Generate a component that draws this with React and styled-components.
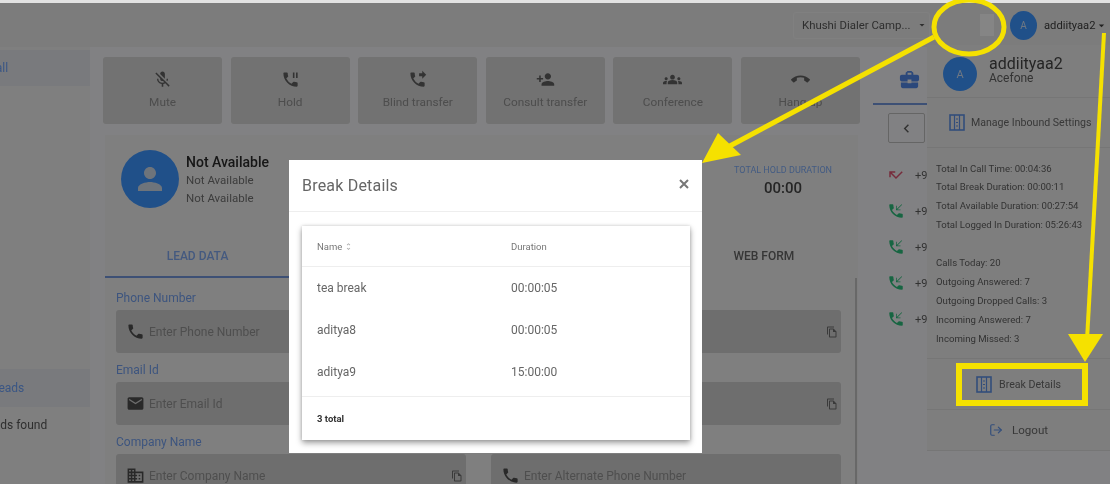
import React from "react";
import styled, { createGlobalStyle } from "styled-components";
import {
  MdMicOff, MdPhonePaused, MdPhoneForwarded, MdPersonAdd, MdGroups, MdCallEnd, MdPerson,
  MdPhone, MdEmail, MdBusiness, MdOutlineFileCopy, MdChevronLeft, MdPhoneCallback,
  MdCallMissed, MdBusinessCenter, MdArrowDropDown, MdUnfoldMore,
} from "react-icons/md";
import { LuLogOut } from "react-icons/lu";

const Global = createGlobalStyle`
  html, body { margin: 0; padding: 0; background: #fff; height: 484px; overflow: hidden; }
  body { font-family: Roboto, "Liberation Sans", sans-serif; }
  * { box-sizing: border-box; }
`;

const Shot = styled.div`
  position: relative;
  width: 1110px;
  height: 484px;
  overflow: hidden;
  filter: blur(0.7px);
`;

const Page = styled.div`
  width: 1110px;
  height: 484px;
  background: #ececee;
  display: flex;
  flex-direction: column;
  color: #3a3a3a;
`;

const TopBar = styled.header`
  height: 47px;
  flex: none;
  background: #e2e2e2;
  display: flex;
  align-items: center;
  padding: 3px 0 0 793px;
`;

const CampaignSelect = styled.div`
  width: 137px;
  height: 27px;
  border: 1px solid #e9e9e9;
  border-radius: 3px;
  display: flex;
  align-items: center;
  padding-left: 8px;
  font-size: 11.4px;
  color: #555;
  white-space: nowrap;
  svg { font-size: 12px; margin-left: 6px; }
`;

const Toggle = styled.div`
  width: 50px;
  height: 22px;
  margin-left: 20px;
  display: flex;
  justify-content: flex-end;
`;

const ToggleThumb = styled.div`
  width: 14px;
  height: 22px;
  background: #f2f2f2;
  margin-right: 6px;
`;

const Avatar = styled.div`
  width: ${(p) => p.$size}px;
  height: ${(p) => p.$h || p.$size}px;
  flex: none;
  border-radius: 50%;
  background: #3b92fa;
  color: #c9d9ee;
  font-size: ${(p) => p.$font || 11}px;
  display: flex;
  align-items: center;
  justify-content: center;
`;

const UserChip = styled.div`
  display: flex;
  align-items: center;
  margin-left: 10px;
  font-size: 11.2px;
  color: #3c3c3c;
  white-space: nowrap;
  span { margin-left: 7px; }
  svg { font-size: 13px; margin-left: 0; }
`;

const Body = styled.div`
  flex: 1;
  min-height: 0;
  display: grid;
  grid-template-columns: 90px 757px 1fr;
  column-gap: 13px;
`;

const Sidebar = styled.aside`
  background: #e8e8e8;
  padding-top: 3px;
  overflow: hidden;
  display: flex;
  flex-direction: column;
`;

const SideItem = styled.div`
  height: ${(p) => p.$h}px;
  margin-top: ${(p) => p.$mt || 0}px;
  color: ${(p) => (p.$active ? "#6a9cf0" : "#555")};
  font-size: 12px;
  white-space: nowrap;
  display: flex;
  align-items: center;
  background: ${(p) => (p.$active ? "#dcdfe4" : "transparent")};
  span { margin-left: ${(p) => p.$shift}px; }
`;

const Main = styled.main`
  padding-top: 10px;
  display: flex;
  flex-direction: column;
  min-width: 0;
`;

const ActionRow = styled.div`
  display: grid;
  grid-template-columns: repeat(6, 1fr);
  gap: 8.5px;
`;

const ActionButton = styled.button`
  height: 67px;
  border: 0;
  border-radius: 3px;
  background: #cfcfcf;
  font: inherit;
  font-size: 11.8px;
  color: #8c8c8c;
  display: flex;
  flex-direction: column;
  align-items: center;
  padding: 13px 0 0;
  gap: 6px;
  svg { font-size: 19px; color: #5e5e5e; }
`;

const Card = styled.section`
  margin: 11px 2px 0;
  flex: 1;
  background: #e8e8e8;
  min-height: 0;
  display: flex;
  flex-direction: column;
`;

const InfoRow = styled.div`
  height: 101px;
  flex: none;
  display: flex;
  padding: 15px 26px 0 16px;
`;

const CallerText = styled.div`
  margin-left: 7px;
  font-size: 11.5px;
  color: #6e6e6e;
  line-height: 18px;
  strong { display: block; font-size: 14px; font-weight: 500; color: #2a2a2a; line-height: 18px; margin-top: 3px; }
`;

const Duration = styled.div`
  margin-left: auto;
  text-align: center;
  font-size: 15px;
  font-weight: 500;
  color: #444;
  margin-top: 15px;
  small { display: block; font-size: 9px; font-weight: 400; color: #7aa6ee; margin-bottom: 4px; }
`;

const Tabs = styled.div`
  height: 42px;
  flex: none;
  display: grid;
  grid-template-columns: repeat(4, 1fr);
`;

const TabItem = styled.div`
  display: flex;
  align-items: center;
  justify-content: center;
  font-size: 12px;
  font-weight: 500;
  color: ${(p) => (p.$active ? "#7da3e8" : "#636363")};
  border-bottom: 2px solid ${(p) => (p.$active ? "#6f93d6" : "transparent")};
  width: ${(p) => (p.$active ? "185px" : "auto")};
`;

const FormArea = styled.div`
  flex: 1;
  min-height: 0;
  overflow: hidden;
  padding: 12px 15px 0 11px;
  border-right: 2px solid #bdbdbd;
  margin-right: 1px;
`;

const FormGrid = styled.div`
  display: grid;
  grid-template-columns: 350px 350px;
  column-gap: 25px;
`;

const Field = styled.div``;

const FieldLabel = styled.label`
  display: block;
  height: 20px;
  font-size: 12px;
  line-height: 16px;
  color: #6f9ae6;
`;

const InputBox = styled.div`
  height: 43px;
  background: #c8c8c8;
  border-radius: 3px;
  display: flex;
  align-items: center;
  padding: 0 3px 0 10px;
  font-size: 12px;
  color: #8f8f8f;
  margin-bottom: 9px;
`;

const LeadIcon = styled.span`
  display: flex;
  margin-right: 4px;
  svg { font-size: 19px; color: #4c4c4c; }
`;

const CopyIcon = styled(MdOutlineFileCopy)`
  margin-left: auto;
  font-size: 12px;
  color: #6a6a6a;
`;

const Right = styled.aside`
  padding-top: 10px;
  min-width: 0;
`;

const RightTab = styled.div`
  width: 54px;
  height: 48px;
  display: flex;
  align-items: center;
  justify-content: flex-end;
  padding: 0 6px 2px 0;
  border-bottom: 2px solid #6f93d6;
  svg { font-size: 23px; color: #4f84e0; }
`;

const BackButton = styled.div`
  width: 37px;
  height: 30px;
  margin: 8px 0 14px 15px;
  border: 1px solid #b8b8b8;
  border-radius: 2px;
  display: flex;
  align-items: center;
  justify-content: center;
  svg { font-size: 17px; color: #5a5a5a; }
`;

const CallRow = styled.div`
  height: 36px;
  width: 54px;
  padding-left: 14px;
  display: flex;
  align-items: center;
  font-size: 11px;
  color: #5c5c5c;
  gap: 10px;
  svg { font-size: 18px; color: ${(p) => p.$color}; flex: none; }
`;

const UserMenu = styled.div`
  position: absolute;
  left: 927px;
  top: 45px;
  width: 183px;
  height: 406px;
  background: #e6e6e6;
  display: flex;
  flex-direction: column;
`;

const MenuHead = styled.div`
  height: 53px;
  flex: none;
  display: flex;
  align-items: flex-start;
  padding: 12px 0 0 16px;
  border-bottom: 1px solid #d8d8d8;
`;

const MenuName = styled.div`
  margin-left: 12px;
  margin-top: -3px;
  font-size: 16px;
  color: #444;
  line-height: 19px;
  small { display: block; font-size: 12px; line-height: 11px; color: #5e5e5e; }
`;

const MenuAction = styled.div`
  height: ${(p) => p.$h}px;
  flex: none;
  display: flex;
  align-items: center;
  justify-content: ${(p) => (p.$left ? "flex-start" : "center")};
  padding-left: ${(p) => (p.$left ? 22 : 0)}px;
  gap: ${(p) => p.$gap || 6}px;
  font-size: ${(p) => p.$font || 10.6}px;
  color: #666;
  border-bottom: 1px solid #d8d8d8;
  white-space: nowrap;
  svg { color: #5c8de0; flex: none; }
`;

const Stats = styled.div`
  height: 211px;
  flex: none;
  padding: 11.5px 0 0 9px;
  border-bottom: 1px solid #d8d8d8;
`;

const StatLine = styled.div`
  font-size: 9.6px;
  line-height: 18.9px;
  color: #5c5c5c;
  margin-bottom: ${(p) => p.$gap || 0}px;
  white-space: nowrap;
`;

const Backdrop = styled.div`
  position: absolute;
  inset: 3px 0 0 0;
  background: rgba(0, 0, 0, 0.45);
`;

const Modal = styled.div`
  position: absolute;
  left: 289px;
  top: 160px;
  width: 413px;
  height: 293px;
  background: #fff;
  display: flex;
  flex-direction: column;
`;

const ModalHead = styled.div`
  height: 52px;
  flex: none;
  border-bottom: 1px solid #eee;
  display: flex;
  align-items: center;
  justify-content: space-between;
  padding: 0 13px 0 13px;
  font-size: 16px;
  color: #666;
  letter-spacing: 0.2px;
  svg { margin-top: -3px; }
`;

const TableCard = styled.div`
  margin: 14px 12px 0 13px;
  height: 214px;
  box-shadow: 0 3px 6px rgba(0, 0, 0, 0.38), 0 0 3px rgba(0, 0, 0, 0.15);
`;

const Row = styled.div`
  display: grid;
  grid-template-columns: 194px 1fr;
  align-items: center;
  padding: 0 0 ${(p) => p.$pb || 0}px 15px;
  height: ${(p) => p.$h}px;
  border-bottom: ${(p) => (p.$line ? "1px solid #eee" : "0")};
  font-size: ${(p) => p.$font || 12}px;
  color: ${(p) => p.$color || "#666"};
  svg { font-size: 9px; color: #aaa; margin-left: 2px; vertical-align: -1px; }
`;

const Total = styled.div`
  height: 43px;
  display: flex;
  align-items: center;
  padding-left: 15px;
  font-size: 9.5px;
  font-weight: 700;
  color: #333;
`;

const Annotations = styled.svg`
  position: absolute;
  inset: 0;
  width: 1110px;
  height: 484px;
  pointer-events: none;
`;

const BookIcon = () => (
  <svg width="16" height="17" viewBox="0 0 16 17" fill="none" stroke="currentColor">
    <rect x="1" y="1" width="14" height="15" strokeWidth="1.6" />
    <path d="M5.5 1v15M10.5 1v15" strokeWidth="1.2" />
    <path d="M7 5h2M7 8.5h2M7 12h2" strokeWidth="1" />
  </svg>
);

const CloseIcon = () => (
  <svg width="10" height="10" viewBox="0 0 10 10" stroke="#777" strokeWidth="2">
    <path d="M1 1l8 8M9 1l-8 8" />
  </svg>
);

const actions = [
  ["Mute", MdMicOff], ["Hold", MdPhonePaused], ["Blind transfer", MdPhoneForwarded],
  ["Consult transfer", MdPersonAdd], ["Conference", MdGroups], ["Hang up", MdCallEnd],
];

const fields = [
  ["Phone Number", "Enter Phone Number", MdPhone, false],
  ["", "", null, true],
  ["Email Id", "Enter Email Id", MdEmail, false],
  ["", "", null, true],
  ["Company Name", "Enter Company Name", MdBusiness, true],
  ["", "Enter Alternate Phone Number", MdPhone, false],
];

const calls = [
  ["#d8506e", MdCallMissed], ["#2bb878", MdPhoneCallback], ["#2bb878", MdPhoneCallback],
  ["#2bb878", MdPhoneCallback], ["#2bb878", MdPhoneCallback],
];

const stats = [
  ["Total In Call Time: 00:04:36"], ["Total Break Duration: 00:00:11"],
  ["Total Available Duration: 00:27:54"], ["Total Logged In Duration: 05:26:43", 19],
  ["Calls Today: 20"], ["Outgoing Answered: 7"], ["Outgoing Dropped Calls: 3"],
  ["Incoming Answered: 7"], ["Incoming Missed: 3"],
];

const breaks = [["tea break", "00:00:05"], ["aditya8", "00:00:05"], ["aditya9", "15:00:00"]];

export default function App() {
  return (
    <Shot>
      <Global />
      <Page>
        <TopBar>
          <CampaignSelect>Khushi Dialer Camp... <MdArrowDropDown /></CampaignSelect>
          <Toggle><ToggleThumb /></Toggle>
          <UserChip>
            <Avatar $size={27} $h={29} $font={10}>A</Avatar>
            <span>addiityaa2</span>
            <MdArrowDropDown />
          </UserChip>
        </TopBar>
        <Body>
          <Sidebar>
            <SideItem $active $h={36} $shift={-12}><span>Call</span></SideItem>
            <SideItem $active $h={38} $mt={283} $shift={-8}><span>Leads</span></SideItem>
            <SideItem $h={20} $mt={8} $shift={-34}><span>No leads found</span></SideItem>
          </Sidebar>
          <Main>
            <ActionRow>
              {actions.map(([label, Icon]) => (
                <ActionButton key={label}><Icon />{label}</ActionButton>
              ))}
            </ActionRow>
            <Card>
              <InfoRow>
                <Avatar $size={58}><MdPerson size={36} color="#c9d3e0" /></Avatar>
                <CallerText>
                  <strong>Not Available</strong>
                  Not Available<br />Not Available
                </CallerText>
                <Duration><small>TOTAL HOLD DURATION</small>00:00</Duration>
              </InfoRow>
              <Tabs>
                <TabItem $active>LEAD DATA</TabItem>
                <TabItem />
                <TabItem />
                <TabItem>WEB FORM</TabItem>
              </Tabs>
              <FormArea>
                <FormGrid>
                  {fields.map(([label, placeholder, Icon, copy], i) => (
                    <Field key={i}>
                      <FieldLabel>{label}</FieldLabel>
                      <InputBox>
                        {Icon && <LeadIcon><Icon /></LeadIcon>}
                        {placeholder}
                        {copy && <CopyIcon />}
                      </InputBox>
                    </Field>
                  ))}
                </FormGrid>
              </FormArea>
            </Card>
          </Main>
          <Right>
            <RightTab><MdBusinessCenter /></RightTab>
            <BackButton><MdChevronLeft /></BackButton>
            {calls.map(([color, Icon], i) => (
              <CallRow key={i} $color={color}><Icon />+9</CallRow>
            ))}
          </Right>
        </Body>
      </Page>
      <UserMenu>
        <MenuHead>
          <Avatar $size={34} $font={11}>A</Avatar>
          <MenuName>addiityaa2<small>Acefone</small></MenuName>
        </MenuHead>
        <MenuAction $h={50} $left><BookIcon />Manage Inbound Settings</MenuAction>
        <Stats>
          {stats.map(([t, gap]) => <StatLine key={t} $gap={gap}>{t}</StatLine>)}
        </Stats>
        <MenuAction $h={51} $gap={7}><BookIcon />Break Details</MenuAction>
        <MenuAction $h={41} $font={11.6} $gap={9}><LuLogOut size={14} />Logout</MenuAction>
      </UserMenu>
      <Backdrop />
      <Modal>
        <ModalHead>Break Details <CloseIcon /></ModalHead>
        <TableCard>
          <Row $h={41} $line $font={9.5} $color="#777">
            <span>Name<MdUnfoldMore /></span><span>Duration</span>
          </Row>
          {breaks.map(([n, d], i) => (
            <Row key={n} $h={i === 2 ? 46 : 42} $pb={i === 2 ? 4 : 0} $line={i === 2}>
              <span>{n}</span><span>{d}</span>
            </Row>
          ))}
          <Total>3 total</Total>
        </TableCard>
      </Modal>
      <Annotations viewBox="0 0 1110 484">
        <ellipse cx="969" cy="27" rx="35" ry="27" fill="none" stroke="#f5e100" strokeWidth="5" />
        <line x1="934" y1="37" x2="728" y2="147" stroke="#f5e100" strokeWidth="5" />
        <polygon points="702,163 718,133 741,155" fill="#f5e100" />
        <line x1="1104" y1="33" x2="1087" y2="340" stroke="#f5e100" strokeWidth="4" />
        <polygon points="1068,334 1103,334 1085,362" fill="#f5e100" />
        <rect x="959" y="366" width="126" height="37" fill="none" stroke="#f5e100" strokeWidth="6" />
      </Annotations>
    </Shot>
  );
}
